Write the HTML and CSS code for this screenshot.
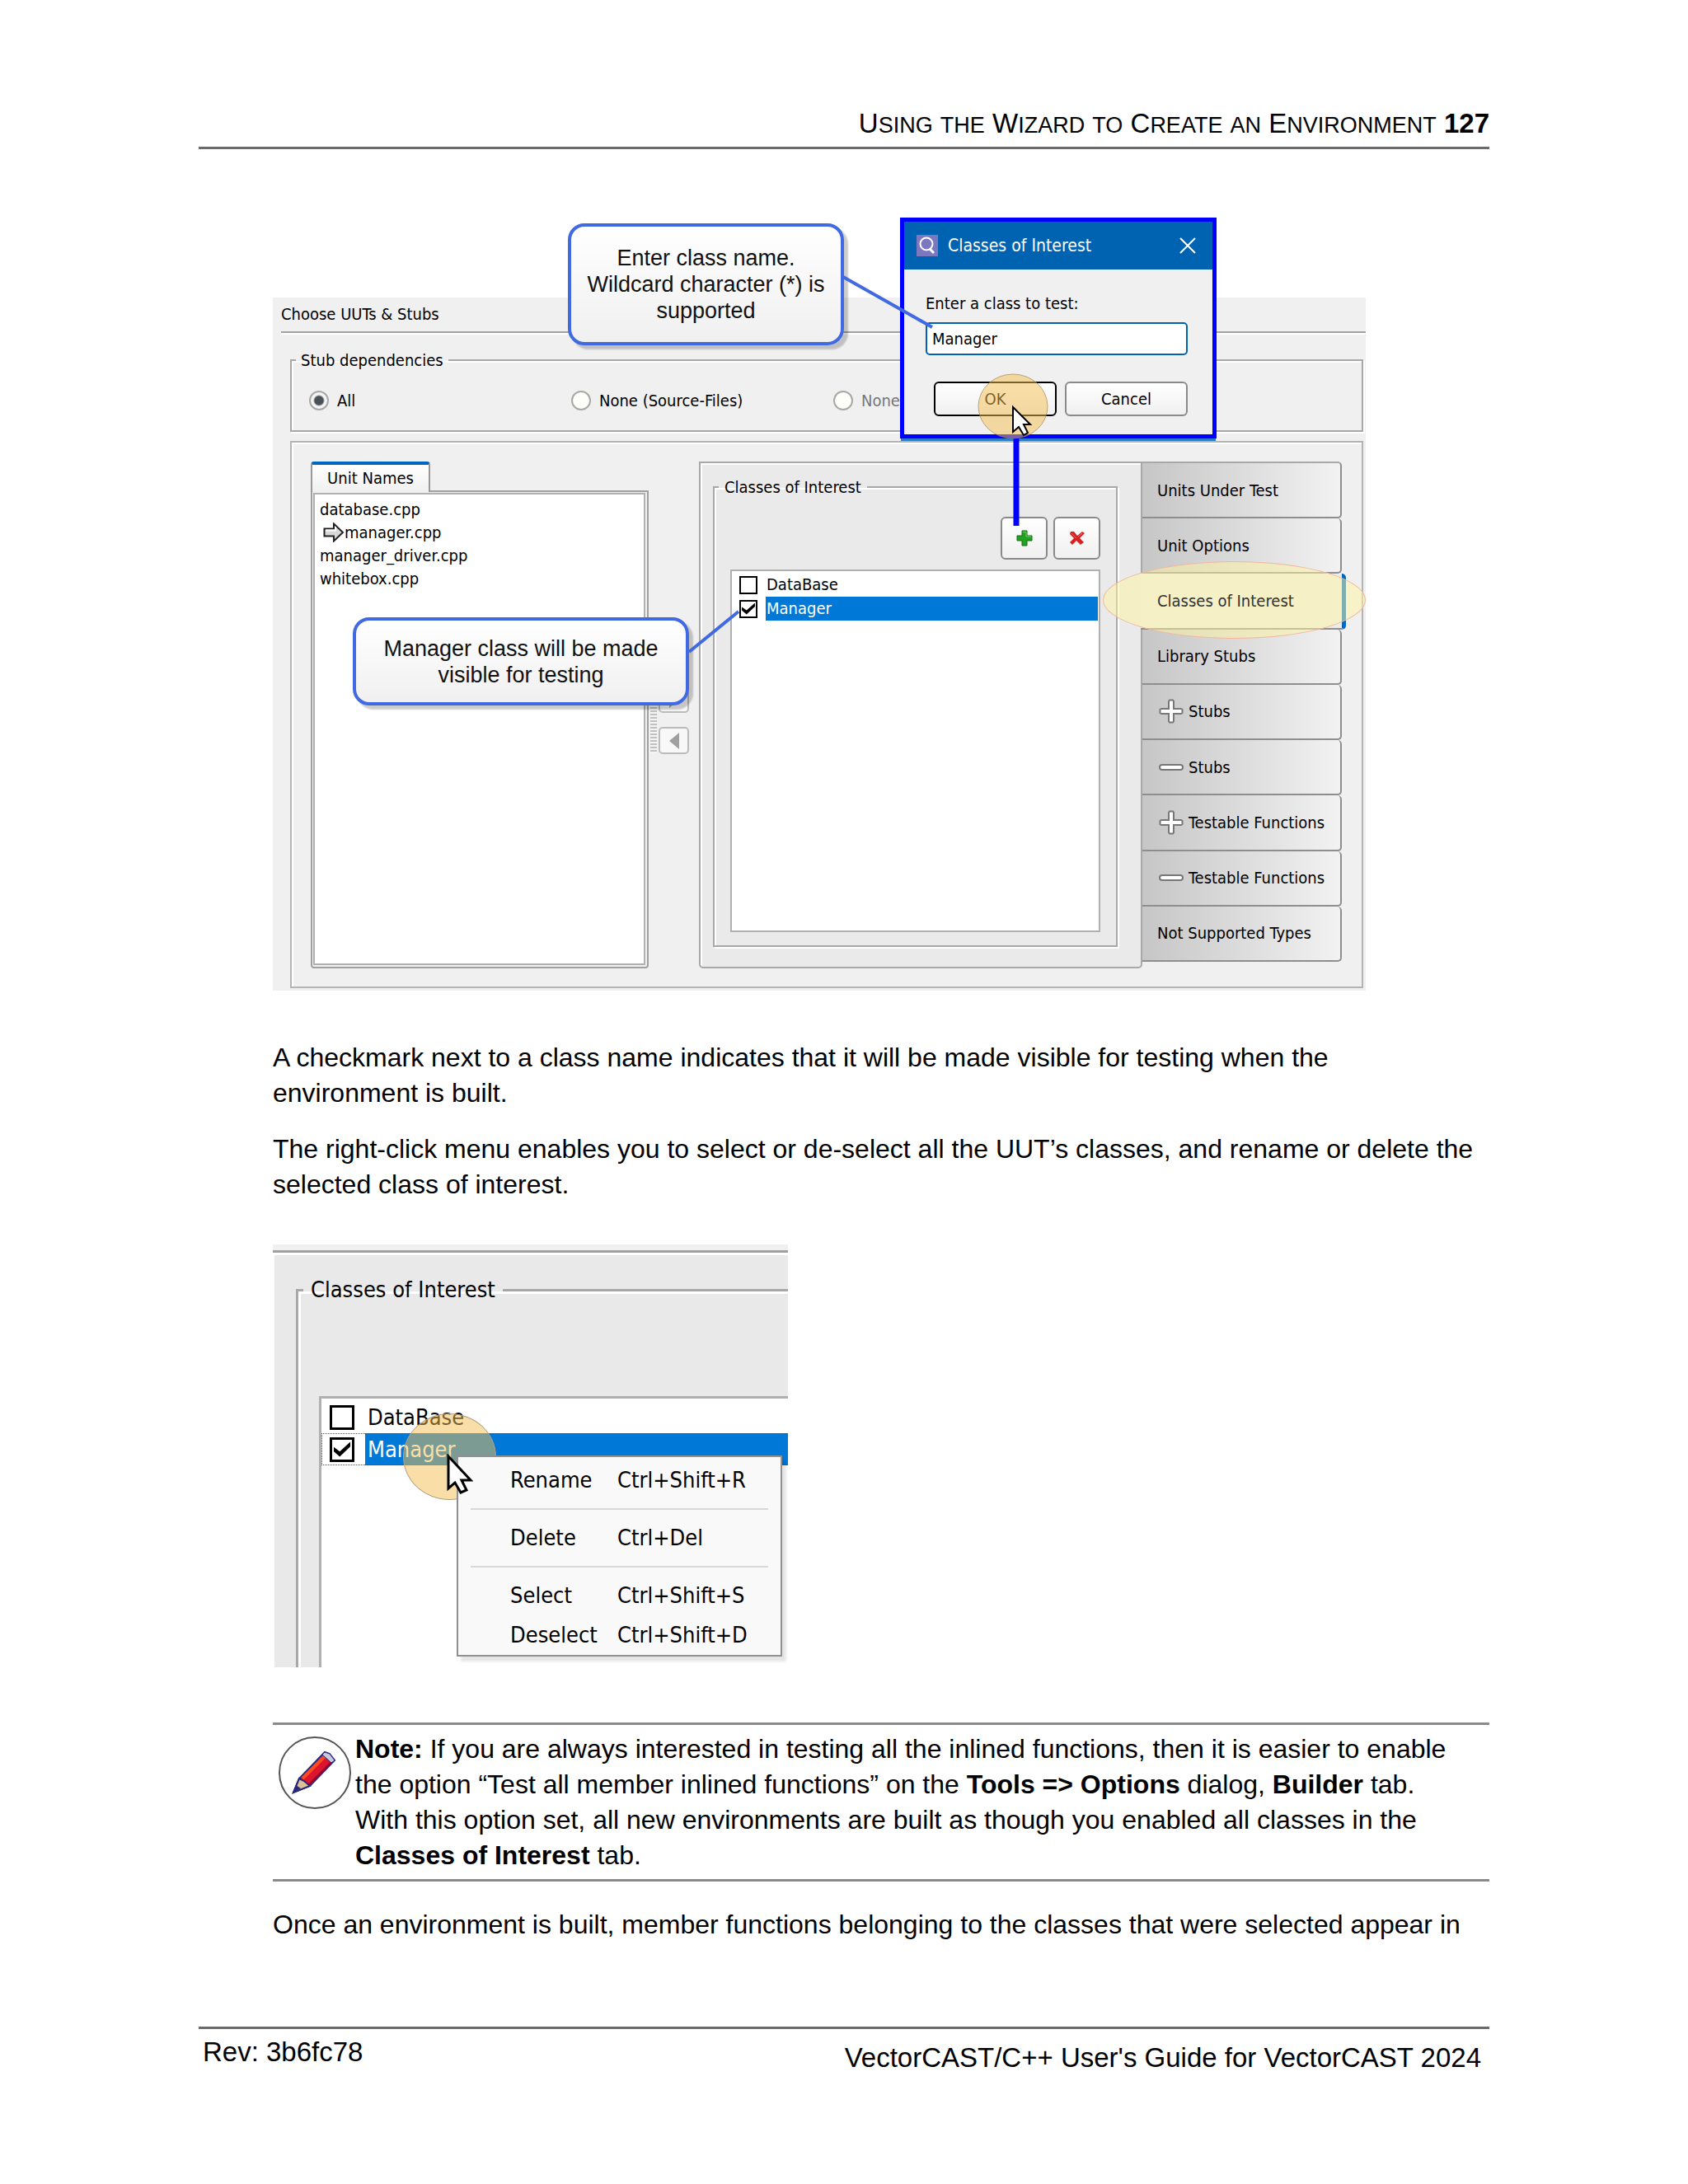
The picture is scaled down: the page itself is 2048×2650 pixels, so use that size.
FILE: index.html
```html
<!DOCTYPE html>
<html lang="en">
<head>
    <meta charset="UTF-8">
    <meta name="viewport" content="width=device-width, initial-scale=1.0">
    <title>VectorCAST/C++ User's Guide</title>
    <link rel="stylesheet" href="styles.css">
</head>
<body>
    <div class="page">
        <header class="page-header">U<span class="small-caps">SING</span> <span class="small-caps">THE</span> W<span class="small-caps">IZARD</span> <span class="small-caps">TO</span> C<span class="small-caps">REATE</span> <span class="small-caps">AN</span> E<span class="small-caps">NVIRONMENT</span> <b>127</b></header>

        <main class="content">
            <div class="wizard">
                <div class="wizard-title">Choose UUTs &amp; Stubs</div>

                <fieldset class="group deps">
                    <legend>Stub dependencies</legend>
                    <div class="radios">
                        <label><input type="radio" name="deps" checked>All</label>
                        <label><input type="radio" name="deps">None (Source-Files)</label>
                        <label class="disabled"><input type="radio" name="deps">None</label>
                    </div>
                </fieldset>

                <div class="panel">
                    <div class="units">
                        <button class="units-tab">Unit Names</button>
                        <div class="units-box">
                            <ul class="units-list">
                                <li>database.cpp</li>
                                <li class="current">
                                    <svg width="26" height="24" viewBox="0 0 26 24"><path d="M1.500 7.500H13V1.500L24 12L13 22.500V16.500H1.500Z" fill="#d8d8d8" stroke="#222" stroke-width="2"/><path d="M3 9.500H15V5" fill="none" stroke="#fff" stroke-width="2"/></svg>manager.cpp
                                </li>
                                <li>manager_driver.cpp</li>
                                <li>whitebox.cpp</li>
                            </ul>
                        </div>
                    </div>

                    <div class="splitter">
                        <div class="grip"></div>
                        <div class="arrows">
                            <button aria-label="Add"><svg width="12" height="20" viewBox="0 0 12 20"><path d="M0 0L12 10L0 20Z" fill="#a0a0a0"/></svg></button>
                            <button aria-label="Remove"><svg width="12" height="20" viewBox="0 0 12 20"><path d="M12 0L0 10L12 20Z" fill="#a0a0a0"/></svg></button>
                        </div>
                    </div>

                    <div class="tab-page">
                        <fieldset class="group classes">
                            <legend>Classes of Interest</legend>
                            <div class="tools">
                                <button aria-label="Add class"><svg width="20" height="20" viewBox="0 0 20 20"><path d="M7 1H13V7H19V13H13V19H7V13H1V7H7Z" fill="#22a022" stroke="#107010" stroke-width="1"/><path d="M8 2.500H12V8H18" fill="none" stroke="#6ed06e" stroke-width="1"/></svg></button>
                                <button aria-label="Delete class"><svg width="20" height="18" viewBox="0 0 20 18"><path d="M2 1L6 1L10 6L16 1L19 3L13 9L18 14L14 17L9 12L4 17L1 14L6 9L1 4Z" fill="#d82020"/><path d="M3 3L9 9M16 3L11 7" stroke="#f48080" stroke-width="1"/></svg></button>
                            </div>
                            <div class="class-list">
                                <label><input type="checkbox"><span>DataBase</span></label>
                                <label class="selected"><input type="checkbox" checked><span>Manager</span></label>
                            </div>
                        </fieldset>
                    </div>

                    <nav class="side-tabs">
                        <button>Units Under Test</button>
                        <button>Unit Options</button>
                        <button class="active"><span>Classes of Interest</span></button>
                        <button>Library Stubs</button>
                        <button><svg width="30" height="30" viewBox="0 0 30 30"><path d="M13 1.500H17L18 3V12H27L28.500 13V17L27 18H18V27L17 28.500H13L12 27V18H3L1.500 17V13L3 12H12V3Z" fill="#fff" stroke="#777" stroke-width="2"/></svg>Stubs</button>
                        <button><svg width="30" height="30" viewBox="0 0 30 30"><rect x="1" y="12" width="28" height="6" rx="3" fill="#fff" stroke="#777" stroke-width="2"/></svg>Stubs</button>
                        <button><svg width="30" height="30" viewBox="0 0 30 30"><path d="M13 1.500H17L18 3V12H27L28.500 13V17L27 18H18V27L17 28.500H13L12 27V18H3L1.500 17V13L3 12H12V3Z" fill="#fff" stroke="#777" stroke-width="2"/></svg>Testable Functions</button>
                        <button><svg width="30" height="30" viewBox="0 0 30 30"><rect x="1" y="12" width="28" height="6" rx="3" fill="#fff" stroke="#777" stroke-width="2"/></svg>Testable Functions</button>
                        <button>Not Supported Types</button>
                    </nav>
                </div>

                <div class="callout callout-name">Enter class name.<br>Wildcard character (*) is<br>supported</div>
                <div class="callout callout-visible">Manager class will be made<br>visible for testing</div>
                <div class="tab-highlight"></div>

                <div class="dialog">
                    <div class="dialog-title">
                        <svg width="26" height="26" viewBox="0 0 26 26"><rect width="26" height="26" fill="#7c78c0"/><circle cx="12" cy="11" r="7.500" fill="none" stroke="#fff" stroke-width="2"/><path d="M16 17L21 22" stroke="#fff" stroke-width="3"/></svg>
                        <span>Classes of Interest</span>
                        <button aria-label="Close"><svg width="20" height="20" viewBox="0 0 20 20"><path d="M1 1L19 19M19 1L1 19" stroke="#fff" stroke-width="2"/></svg></button>
                    </div>
                    <div class="dialog-body">
                        <label for="className">Enter a class to test:</label>
                        <input type="text" id="className" value="Manager">
                        <div class="dialog-buttons">
                            <button class="default">OK</button>
                            <button>Cancel</button>
                        </div>
                    </div>
                </div>

                <!-- connector lines and mouse pointer -->
                <svg class="overlay" width="1326" height="841" viewBox="0 0 1326 841">
                    <path d="M692 -25L800 36M505 430L565 381" stroke="#4169e1" stroke-width="4" fill="none"/>
                    <path d="M902 171V277" stroke="#0000ff" stroke-width="7"/>
                    <ellipse cx="898" cy="132" rx="42" ry="39" fill="#f5be50" fill-opacity="0.500" stroke="#a08850" stroke-opacity="0.700"/>
                    <path d="M898 133V163L905 157L911 167L916 164L911 154H919Z" fill="#fff" stroke="#000" stroke-width="2"/>
                </svg>
            </div>

            <p>A checkmark next to a class name indicates that it will be made visible for testing when the<br>environment is built.</p>
            <p>The right-click menu enables you to select or de-select all the UUT’s classes, and rename or delete the<br>selected class of interest.</p>

            <div class="closeup">
                <div class="closeup-body">
                    <fieldset class="group closeup-group">
                        <legend>Classes of Interest</legend>
                        <div class="class-list">
                            <label><input type="checkbox"><span>DataBase</span></label>
                            <label class="selected"><input type="checkbox" checked><span>Manager</span></label>
                        </div>
                    </fieldset>
                </div>
                <div class="click-spot"></div>
                <div class="menu">
                    <button><span>Rename</span><span>Ctrl+Shift+R</span></button>
                    <hr>
                    <button><span>Delete</span><span>Ctrl+Del</span></button>
                    <hr>
                    <button><span>Select</span><span>Ctrl+Shift+S</span></button>
                    <button><span>Deselect</span><span>Ctrl+Shift+D</span></button>
                </div>
                <svg class="pointer" width="32" height="50" viewBox="0 0 32 50"><path d="M2 3V42L10 35L17 47L24 44L18 32H29Z" fill="#fff" stroke="#000" stroke-width="3"/></svg>
            </div>

            <div class="note">
                <svg width="88" height="88" viewBox="0 0 88 88">
                    <circle cx="44" cy="44" r="43" fill="#fff" stroke="#555" stroke-width="2"/>
                    <path d="M18 68L25 51L56 19L62 21L68 29L38 60Z" fill="#dc1430" stroke="#28287a" stroke-width="2"/>
                    <path d="M29 51L57 23" stroke="#ff4a20" stroke-width="4"/>
                    <path d="M37 58L65 30" stroke="#a00028" stroke-width="2"/>
                    <path d="M56 19L62 21L68 29L64 32L53 22Z" fill="#c8c8e0" stroke="#28287a" stroke-width="1"/>
                    <path d="M18 68L25 51L31 54L38 60Z" fill="#dcc098" stroke="#28287a" stroke-width="2"/>
                    <path d="M18 68L21 59L27 63Z" fill="#28287a"/>
                </svg>
                <div><b>Note:</b> If you are always interested in testing all the inlined functions, then it is easier to enable<br>the option “Test all member inlined functions” on the <b>Tools =&gt; Options</b> dialog, <b>Builder</b> tab.<br>With this option set, all new environments are built as though you enabled all classes in the<br><b>Classes of Interest</b> tab.</div>
            </div>

            <p class="last">Once an environment is built, member functions belonging to the classes that were selected appear in</p>
        </main>

        <footer class="page-footer">
            <span>Rev: 3b6fc78</span>
            <span class="guide">VectorCAST/C++ User's Guide for VectorCAST 2024</span>
        </footer>
    </div>
</body>
</html>
```
FILE: styles.css
```css
* {
    box-sizing: border-box;
}
body {
    margin: 0;
    background-color: white;
    color: black;
    font-family: "Liberation Sans", Arial, sans-serif;
    font-size: 33px;
    line-height: 43px;
}
.page {
    padding: 128px 241px 96px;
}
.page-header {
    text-align: right;
    padding-bottom: 7px;
    border-bottom: 3px solid #6a6a6a;
}
.small-caps {
    font-size: 27px;
    line-height: 1;
}
.content {
    padding-left: 90px;
    font-size: 32px;
}
p {
    margin: 0 0 25px;
}
svg {
    display: block;
    flex: none;
}
button {
    font: inherit;
    color: inherit;
    padding: 0;
    border: none;
    background: none;
}

/* wizard window */
.wizard,
.closeup {
    position: relative;
    font-family: "DejaVu Sans Condensed", "DejaVu Sans", sans-serif;
    font-size: 20px;
    line-height: 24px;
}
.wizard {
    max-width: 1326px;
    margin: 180px 0 60px;
    padding: 8px 3px 3px 21px;
    background-color: #f0f0f0;
}
.wizard-title {
    margin: 0 -3px 0 -11px;
    padding-bottom: 9px;
    border-bottom: 2px solid #a0a0a0;
    box-shadow: 0 2px 0 #fff;
}
.group {
    margin: 0;
    min-width: 0;
    border: 2px solid #a8a8a8;
    box-shadow: 2px 2px 0 #fff, inset 2px 2px 0 #fff;
}
.group legend {
    padding: 0 6px;
}
.deps {
    margin-top: 21px;
    padding: 25px 5px 24px;
}
.radios {
    display: grid;
    grid-template-columns: repeat(4, 318px);
    padding-left: 16px;
}
.radios label {
    display: flex;
    align-items: center;
    gap: 10px;
}
.radios .disabled {
    color: #777;
}
input[type="radio"] {
    appearance: none;
    width: 24px;
    height: 24px;
    margin: 0;
    border: 2px solid #a8a8a4;
    border-radius: 50%;
    background-color: #fdfdfa;
}
input[type="radio"]:checked {
    background: radial-gradient(circle, #4a5258 0, #4a5258 5px, #f4f4f4 7px);
}
.panel {
    display: flex;
    margin-top: 11px;
    padding: 23px 20px 22px 23px;
    border: 2px solid #b4b4b4;
    box-shadow: inset 2px 2px 0 #fff;
}

/* unit names */
.units {
    display: flex;
    flex-direction: column;
    width: 410px;
}
.units-tab {
    position: relative;
    width: 145px;
    height: 37px;
    margin-bottom: -2px;
    padding-bottom: 2px;
    border: 2px solid #999;
    border-top: 4px solid #0067c0;
    border-bottom: none;
    border-radius: 4px 4px 0 0;
    background: linear-gradient(#fff, #f0f0f0);
}
.units-box {
    flex: 1;
    display: flex;
    padding: 1px 2px 2px 1px;
    border: 2px solid #a0a0a0;
    border-radius: 0 0 4px 4px;
    background-color: #f0f0f0;
}
.units-list {
    flex: 1;
    margin: 0;
    padding: 4px 6px;
    list-style: none;
    line-height: 28px;
    border: 2px solid #b0b0b0;
    background-color: white;
}
.current {
    display: flex;
    align-items: center;
    padding-left: 4px;
}
.splitter {
    display: flex;
    align-items: center;
    width: 61px;
    padding: 12px 0 0 2px;
    gap: 2px;
}
.grip {
    width: 8px;
    height: 80px;
    background: repeating-linear-gradient(#c0c0c0 0, #c0c0c0 2px, #f4f4f4 2px, #f4f4f4 4px);
}
.arrows {
    display: grid;
    gap: 17px;
}
.arrows button {
    display: grid;
    place-items: center;
    width: 37px;
    height: 33px;
    border: 2px solid #bbb;
    border-radius: 5px;
    background-color: #f8f8f8;
}

/* classes of interest */
.tab-page {
    flex: 1;
    padding: 17px 28px 24px 15px;
    border: 2px solid #a8a8a8;
    border-radius: 0 0 5px 5px;
    background-color: #eaeaea;
    box-shadow: inset 2px 2px 0 #fff;
}
.classes {
    padding: 24px 19px 16px;
}
.classes legend {
    margin-left: -14px;
    padding: 0 7px;
}
.tools {
    display: flex;
    justify-content: flex-end;
    gap: 7px;
}
.tools button {
    display: grid;
    place-items: center;
    width: 57px;
    height: 52px;
    border: 2px solid #8a8a8a;
    border-radius: 6px;
    background: linear-gradient(#fff, #f0f0f0);
}
.class-list {
    height: 440px;
    margin-top: 12px;
    padding: 2px 1px 0 0;
    line-height: 29px;
    border: 2px solid #b0b0b0;
    background-color: white;
}
.class-list label {
    display: flex;
    align-items: center;
    gap: 10px;
    padding-left: 9px;
}
.class-list span {
    flex: 1;
    padding-left: 1px;
}
.class-list .selected span {
    color: white;
    background-color: #0078d7;
}
input[type="checkbox"] {
    appearance: none;
    display: grid;
    place-items: center;
    width: 22px;
    height: 22px;
    margin: 0;
    border: 2px solid black;
    background-color: white;
}
input[type="checkbox"]:checked::before {
    content: "";
    width: 16px;
    height: 14px;
    background-color: black;
    clip-path: polygon(0 35%, 36% 65%, 100% 0, 100% 32%, 36% 100%, 0 65%);
}
.side-tabs {
    display: flex;
    flex-direction: column;
    width: 246px;
    padding: 0 4px 8px 0;
}
.side-tabs button {
    flex: 1;
    display: flex;
    align-items: center;
    gap: 6px;
    padding: 0 0 0 18px;
    text-align: left;
    border: 2px solid #8e8e8e;
    border-top: none;
    border-left: none;
    border-radius: 0 5px 5px 0;
    background: linear-gradient(90deg, #c6c6c6, #f2f2f2);
}
.side-tabs button:first-child {
    border-top: 2px solid #a8a8a8;
}
.side-tabs .active {
    margin: 0 -5px 0 -2px;
    padding-left: 20px;
    border-right: 5px solid #0067c0;
    background: #ececec;
}
.side-tabs .active span {
    position: relative;
    z-index: 2;
    color: #333;
}
.side-tabs svg {
    margin-left: 2px;
}

/* annotations over the window */
.callout {
    position: absolute;
    display: grid;
    place-items: center;
    text-align: center;
    font-family: "Liberation Sans", Arial, sans-serif;
    font-size: 27px;
    line-height: 32px;
    color: #111;
    border: 4px solid #4169e1;
    border-radius: 20px;
    background: linear-gradient(#fff, #f0f0f0);
    box-shadow: 5px 5px 2px rgba(0, 0, 0, 0.2);
}
.callout-name {
    left: 358px;
    top: -90px;
    width: 335px;
    height: 148px;
}
.callout-visible {
    left: 97px;
    top: 388px;
    width: 408px;
    height: 107px;
}
.tab-highlight {
    position: absolute;
    z-index: 1;
    left: 1007px;
    top: 320px;
    width: 319px;
    height: 94px;
    border: 1px solid #f0b8a0;
    border-radius: 50%;
    background-color: rgba(255, 244, 160, 0.5);
}
.overlay {
    position: absolute;
    left: 0;
    top: 0;
    overflow: visible;
    pointer-events: none;
}

/* dialog */
.dialog {
    position: absolute;
    left: 761px;
    top: -97px;
    width: 384px;
    border: 5px solid #0000ff;
    background-color: #f0f0f0;
    box-shadow: 0 4px 0 -1px #2a7fc4;
}
.dialog-title {
    display: flex;
    align-items: center;
    height: 58px;
    gap: 12px;
    padding: 0 20px 0 15px;
    font-size: 21px;
    color: white;
    background-color: #0063b1;
}
.dialog-title span {
    flex: 1;
}
.dialog-body {
    display: flex;
    flex-direction: column;
    padding: 29px 30px 22px 26px;
}
.dialog-body input {
    height: 40px;
    margin-top: 11px;
    padding: 0 6px;
    font: inherit;
    border: 2px solid #0063b1;
    border-radius: 5px;
    background-color: white;
}
.dialog-buttons {
    display: flex;
    justify-content: flex-end;
    gap: 10px;
    margin-top: 32px;
}
.dialog-buttons button {
    width: 149px;
    height: 42px;
    border: 2px solid #8a8a8a;
    border-radius: 6px;
    background: linear-gradient(#fff, #f0f0f0);
}
.dialog-buttons .default {
    border-color: black;
}

/* right-click menu close-up */
.closeup {
    max-width: 625px;
    height: 513px;
    margin: 51px 0 67px;
    padding-top: 7px;
    overflow: hidden;
    font-size: 27px;
    line-height: 32px;
    background-color: #f0f0f0;
}
.closeup-body {
    height: 100%;
    padding: 29px 0 0 28px;
    border-top: 3px solid #a0a0a0;
    box-shadow: inset 2px 3px 0 #fff;
    background-color: #e9e9e9;
}
.closeup-group {
    margin-right: -10px;
    padding: 0 0 0 25px;
    border-width: 3px;
    box-shadow: inset 3px 3px 0 #fff;
}
.closeup-group legend {
    margin-left: -19px;
    padding: 0 9px;
}
.closeup-group .class-list {
    margin-top: 113px;
    padding-top: 3px;
    line-height: 39px;
    border-width: 3px;
}
.closeup-group label {
    gap: 13px;
    padding-left: 10px;
}
.closeup-group .selected {
    outline: 1px dotted #555;
    outline-offset: -1px;
}
.closeup-group .class-list span {
    padding-left: 3px;
}
.closeup-group input[type="checkbox"] {
    width: 30px;
    height: 30px;
    border-width: 3px;
}
.closeup-group input[type="checkbox"]:checked::before {
    width: 20px;
    height: 18px;
}
.click-spot {
    position: absolute;
    left: 158px;
    top: 205px;
    width: 113px;
    height: 105px;
    border: 1px solid #b0a080;
    border-radius: 50%;
    background-color: rgba(245, 190, 80, 0.5);
}
.menu {
    position: absolute;
    left: 223px;
    top: 256px;
    width: 395px;
    padding: 4px 15px 0;
    border: 2px solid #909090;
    background-color: #f9f9f9;
    box-shadow: 5px 6px 3px rgba(0, 0, 0, 0.1);
}
.menu button {
    display: grid;
    grid-template-columns: 130px 1fr;
    align-items: center;
    width: 100%;
    height: 48px;
    padding-left: 48px;
    text-align: left;
}
.menu hr {
    margin: 10px 0;
    border: none;
    border-top: 2px solid #d8d8d8;
}
.pointer {
    position: absolute;
    left: 211px;
    top: 254px;
}

/* note */
.note {
    display: flex;
    gap: 5px;
    margin-bottom: 31px;
    padding: 8px 0 7px 7px;
    border-top: 3px solid #8a8a8a;
    border-bottom: 3px solid #8a8a8a;
}
.note svg {
    margin-top: 6px;
}
.last {
    margin-bottom: 102px;
}
.page-footer {
    display: flex;
    justify-content: space-between;
    padding: 6px 10px 0 5px;
    border-top: 3px solid #6a6a6a;
}
.guide {
    padding-top: 7px;
}
```
